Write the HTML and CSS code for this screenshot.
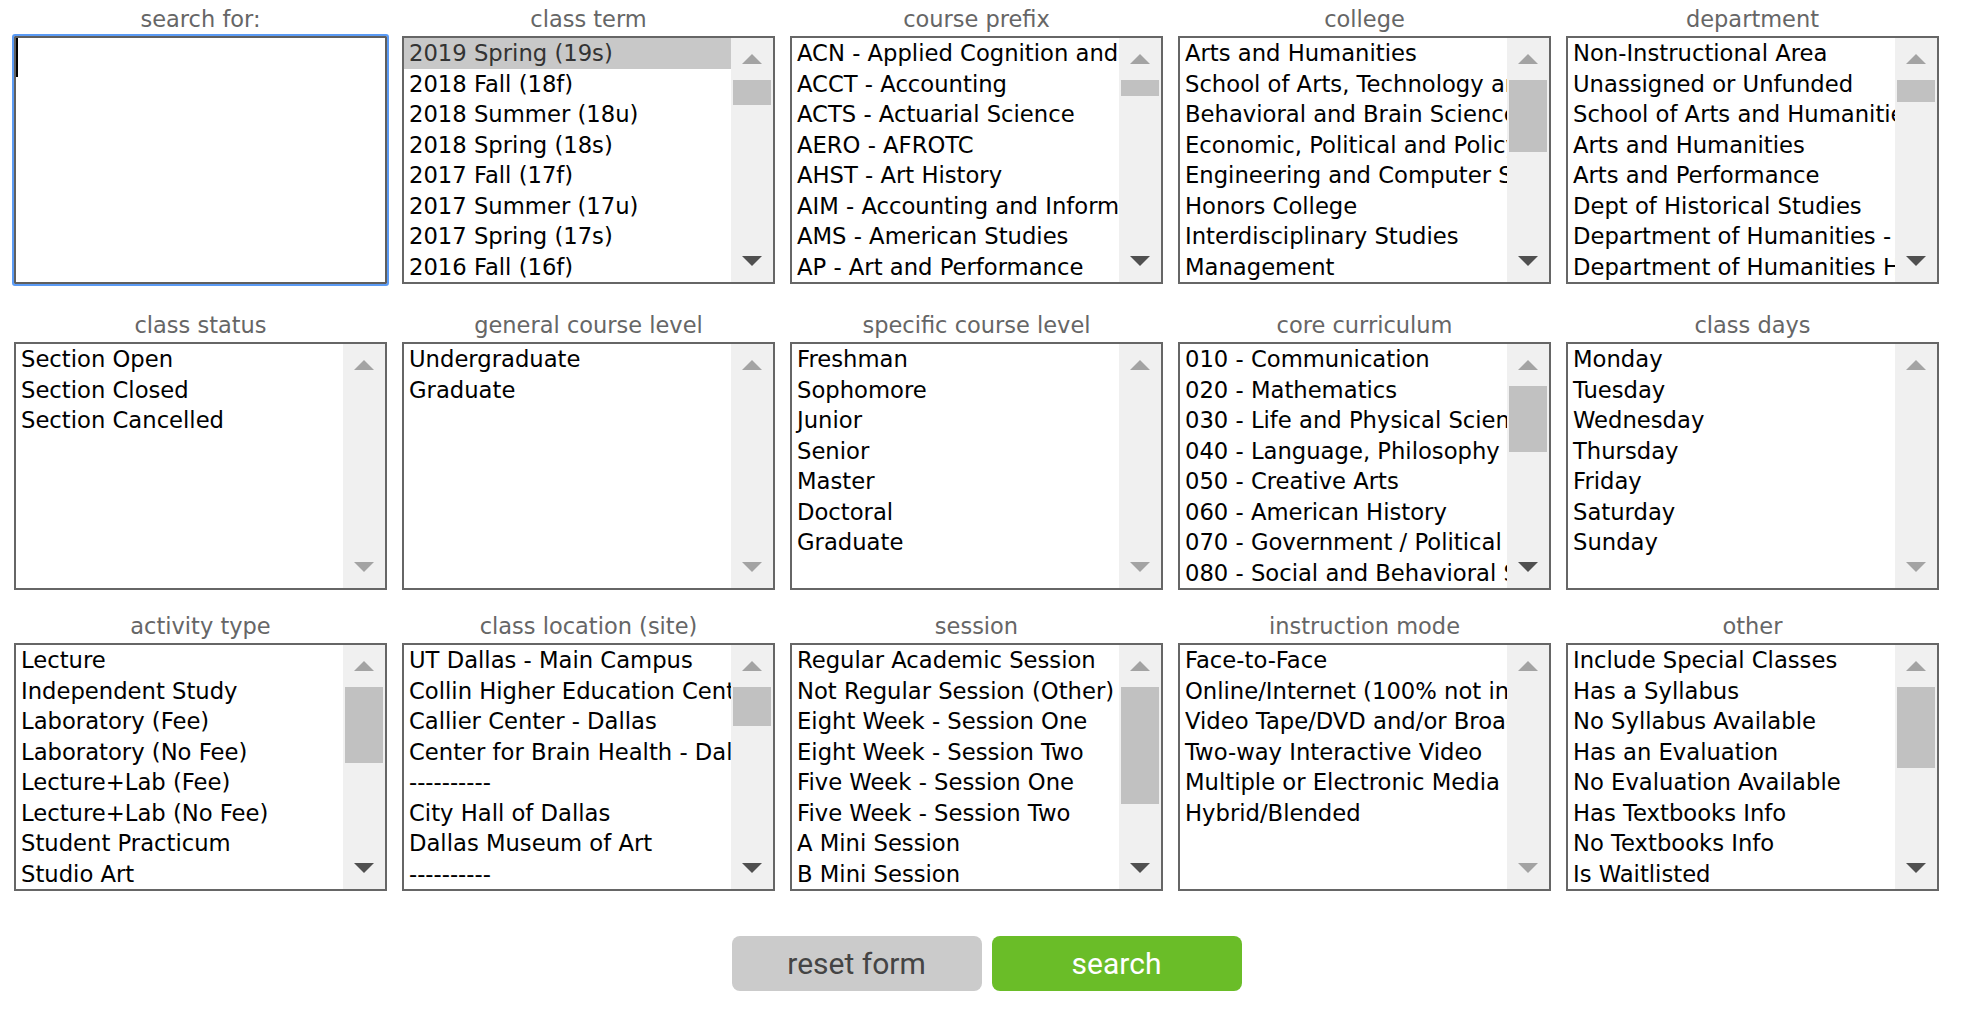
FILE: index.html
```html
<!DOCTYPE html>
<html lang="en">
<head>
<meta charset="utf-8">
<title>Class Search</title>
<link rel="stylesheet" href="styles.css">
</head>
<body>
<form class="search-form">
  <div class="field-grid">

    <div class="field">
      <div class="field-label">search for:</div>
      <div class="textbox is-focused"><span class="caret"></span></div>
    </div>

    <div class="field">
      <div class="field-label">class term</div>
      <div class="listbox">
        <ul class="options">
          <li class="option is-selected">2019 Spring (19s)</li>
          <li class="option">2018 Fall (18f)</li>
          <li class="option">2018 Summer (18u)</li>
          <li class="option">2018 Spring (18s)</li>
          <li class="option">2017 Fall (17f)</li>
          <li class="option">2017 Summer (17u)</li>
          <li class="option">2017 Spring (17s)</li>
          <li class="option">2016 Fall (16f)</li>
          <li class="option">2016 Summer (16u)</li>
        </ul>
        <div class="scrollbar">
          <div class="sb-btn"><span class="arrow-up"></span></div>
          <div class="sb-track"><div class="sb-thumb" style="height:25px"></div></div>
          <div class="sb-btn is-active"><span class="arrow-down"></span></div>
        </div>
      </div>
    </div>

    <div class="field">
      <div class="field-label">course prefix</div>
      <div class="listbox">
        <ul class="options">
          <li class="option">ACN - Applied Cognition and Neuroscience</li>
          <li class="option">ACCT - Accounting</li>
          <li class="option">ACTS - Actuarial Science</li>
          <li class="option">AERO - AFROTC</li>
          <li class="option">AHST - Art History</li>
          <li class="option">AIM - Accounting and Information Management</li>
          <li class="option">AMS - American Studies</li>
          <li class="option">AP - Art and Performance</li>
          <li class="option">ARAB - Arabic</li>
        </ul>
        <div class="scrollbar">
          <div class="sb-btn"><span class="arrow-up"></span></div>
          <div class="sb-track"><div class="sb-thumb" style="height:16px"></div></div>
          <div class="sb-btn is-active"><span class="arrow-down"></span></div>
        </div>
      </div>
    </div>

    <div class="field">
      <div class="field-label">college</div>
      <div class="listbox">
        <ul class="options">
          <li class="option">Arts and Humanities</li>
          <li class="option">School of Arts, Technology and Emerging Communication</li>
          <li class="option">Behavioral and Brain Sciences</li>
          <li class="option">Economic, Political and Policy Sciences</li>
          <li class="option">Engineering and Computer Science</li>
          <li class="option">Honors College</li>
          <li class="option">Interdisciplinary Studies</li>
          <li class="option">Management</li>
          <li class="option">Natural Sciences and Mathematics</li>
        </ul>
        <div class="scrollbar">
          <div class="sb-btn"><span class="arrow-up"></span></div>
          <div class="sb-track"><div class="sb-thumb" style="height:72px"></div></div>
          <div class="sb-btn is-active"><span class="arrow-down"></span></div>
        </div>
      </div>
    </div>

    <div class="field">
      <div class="field-label">department</div>
      <div class="listbox">
        <ul class="options">
          <li class="option">Non-Instructional Area</li>
          <li class="option">Unassigned or Unfunded</li>
          <li class="option">School of Arts and Humanities</li>
          <li class="option">Arts and Humanities</li>
          <li class="option">Arts and Performance</li>
          <li class="option">Dept of Historical Studies</li>
          <li class="option">Department of Humanities - Studies in Literature</li>
          <li class="option">Department of Humanities History of Ideas</li>
          <li class="option">Department of Literary Studies</li>
        </ul>
        <div class="scrollbar">
          <div class="sb-btn"><span class="arrow-up"></span></div>
          <div class="sb-track"><div class="sb-thumb" style="height:22px"></div></div>
          <div class="sb-btn is-active"><span class="arrow-down"></span></div>
        </div>
      </div>
    </div>

    <div class="field">
      <div class="field-label">class status</div>
      <div class="listbox">
        <ul class="options">
          <li class="option">Section Open</li>
          <li class="option">Section Closed</li>
          <li class="option">Section Cancelled</li>
        </ul>
        <div class="scrollbar">
          <div class="sb-btn"><span class="arrow-up"></span></div>
          <div class="sb-track"></div>
          <div class="sb-btn"><span class="arrow-down"></span></div>
        </div>
      </div>
    </div>

    <div class="field">
      <div class="field-label">general course level</div>
      <div class="listbox">
        <ul class="options">
          <li class="option">Undergraduate</li>
          <li class="option">Graduate</li>
        </ul>
        <div class="scrollbar">
          <div class="sb-btn"><span class="arrow-up"></span></div>
          <div class="sb-track"></div>
          <div class="sb-btn"><span class="arrow-down"></span></div>
        </div>
      </div>
    </div>

    <div class="field">
      <div class="field-label">specific course level</div>
      <div class="listbox">
        <ul class="options">
          <li class="option">Freshman</li>
          <li class="option">Sophomore</li>
          <li class="option">Junior</li>
          <li class="option">Senior</li>
          <li class="option">Master</li>
          <li class="option">Doctoral</li>
          <li class="option">Graduate</li>
        </ul>
        <div class="scrollbar">
          <div class="sb-btn"><span class="arrow-up"></span></div>
          <div class="sb-track"></div>
          <div class="sb-btn"><span class="arrow-down"></span></div>
        </div>
      </div>
    </div>

    <div class="field">
      <div class="field-label">core curriculum</div>
      <div class="listbox">
        <ul class="options">
          <li class="option">010 - Communication</li>
          <li class="option">020 - Mathematics</li>
          <li class="option">030 - Life and Physical Sciences</li>
          <li class="option">040 - Language, Philosophy and Culture</li>
          <li class="option">050 - Creative Arts</li>
          <li class="option">060 - American History</li>
          <li class="option">070 - Government / Political Science</li>
          <li class="option">080 - Social and Behavioral Sciences</li>
          <li class="option">090 - Component Area Option</li>
        </ul>
        <div class="scrollbar">
          <div class="sb-btn"><span class="arrow-up"></span></div>
          <div class="sb-track"><div class="sb-thumb" style="height:66px"></div></div>
          <div class="sb-btn is-active"><span class="arrow-down"></span></div>
        </div>
      </div>
    </div>

    <div class="field">
      <div class="field-label">class days</div>
      <div class="listbox">
        <ul class="options">
          <li class="option">Monday</li>
          <li class="option">Tuesday</li>
          <li class="option">Wednesday</li>
          <li class="option">Thursday</li>
          <li class="option">Friday</li>
          <li class="option">Saturday</li>
          <li class="option">Sunday</li>
        </ul>
        <div class="scrollbar">
          <div class="sb-btn"><span class="arrow-up"></span></div>
          <div class="sb-track"></div>
          <div class="sb-btn"><span class="arrow-down"></span></div>
        </div>
      </div>
    </div>

    <div class="field">
      <div class="field-label">activity type</div>
      <div class="listbox">
        <ul class="options">
          <li class="option">Lecture</li>
          <li class="option">Independent Study</li>
          <li class="option">Laboratory (Fee)</li>
          <li class="option">Laboratory (No Fee)</li>
          <li class="option">Lecture+Lab (Fee)</li>
          <li class="option">Lecture+Lab (No Fee)</li>
          <li class="option">Student Practicum</li>
          <li class="option">Studio Art</li>
          <li class="option">Seminar</li>
        </ul>
        <div class="scrollbar">
          <div class="sb-btn"><span class="arrow-up"></span></div>
          <div class="sb-track"><div class="sb-thumb" style="height:76px"></div></div>
          <div class="sb-btn is-active"><span class="arrow-down"></span></div>
        </div>
      </div>
    </div>

    <div class="field">
      <div class="field-label">class location (site)</div>
      <div class="listbox">
        <ul class="options">
          <li class="option">UT Dallas - Main Campus</li>
          <li class="option">Collin Higher Education Center</li>
          <li class="option">Callier Center - Dallas</li>
          <li class="option">Center for Brain Health - Dallas</li>
          <li class="option">----------</li>
          <li class="option">City Hall of Dallas</li>
          <li class="option">Dallas Museum of Art</li>
          <li class="option">----------</li>
          <li class="option">Online</li>
        </ul>
        <div class="scrollbar">
          <div class="sb-btn"><span class="arrow-up"></span></div>
          <div class="sb-track"><div class="sb-thumb" style="height:39px"></div></div>
          <div class="sb-btn is-active"><span class="arrow-down"></span></div>
        </div>
      </div>
    </div>

    <div class="field">
      <div class="field-label">session</div>
      <div class="listbox">
        <ul class="options">
          <li class="option">Regular Academic Session</li>
          <li class="option">Not Regular Session (Other)</li>
          <li class="option">Eight Week - Session One</li>
          <li class="option">Eight Week - Session Two</li>
          <li class="option">Five Week - Session One</li>
          <li class="option">Five Week - Session Two</li>
          <li class="option">A Mini Session</li>
          <li class="option">B Mini Session</li>
          <li class="option">Ten Week Session</li>
        </ul>
        <div class="scrollbar">
          <div class="sb-btn"><span class="arrow-up"></span></div>
          <div class="sb-track"><div class="sb-thumb" style="height:117px"></div></div>
          <div class="sb-btn is-active"><span class="arrow-down"></span></div>
        </div>
      </div>
    </div>

    <div class="field">
      <div class="field-label">instruction mode</div>
      <div class="listbox">
        <ul class="options">
          <li class="option">Face-to-Face</li>
          <li class="option">Online/Internet (100% not in classroom)</li>
          <li class="option">Video Tape/DVD and/or Broadcast</li>
          <li class="option">Two-way Interactive Video</li>
          <li class="option">Multiple or Electronic Media</li>
          <li class="option">Hybrid/Blended</li>
        </ul>
        <div class="scrollbar">
          <div class="sb-btn"><span class="arrow-up"></span></div>
          <div class="sb-track"></div>
          <div class="sb-btn"><span class="arrow-down"></span></div>
        </div>
      </div>
    </div>

    <div class="field">
      <div class="field-label">other</div>
      <div class="listbox">
        <ul class="options">
          <li class="option">Include Special Classes</li>
          <li class="option">Has a Syllabus</li>
          <li class="option">No Syllabus Available</li>
          <li class="option">Has an Evaluation</li>
          <li class="option">No Evaluation Available</li>
          <li class="option">Has Textbooks Info</li>
          <li class="option">No Textbooks Info</li>
          <li class="option">Is Waitlisted</li>
          <li class="option">Is Not Waitlisted</li>
        </ul>
        <div class="scrollbar">
          <div class="sb-btn"><span class="arrow-up"></span></div>
          <div class="sb-track"><div class="sb-thumb" style="height:81px"></div></div>
          <div class="sb-btn is-active"><span class="arrow-down"></span></div>
        </div>
      </div>
    </div>

  </div>

  <div class="actions">
    <button type="button" class="btn btn-reset">reset form</button>
    <button type="button" class="btn btn-search">search</button>
  </div>
</form>
</body>
</html>
```

FILE: styles.css
```css
* {
  box-sizing: border-box;
}

html,
body {
  margin: 0;
  padding: 0;
  background: #ffffff;
}

body {
  font-family: "DejaVu Sans", Verdana, sans-serif;
  color: #000000;
}

.search-form {
  width: 1939px;
  padding-left: 14px;
}

.field-grid {
  display: grid;
  grid-template-columns: repeat(5, 373px);
  grid-template-rows: 284px 306px 301px;
  column-gap: 15px;
}

.field {
  align-self: end;
  display: flex;
  flex-direction: column;
}

.field-label {
  height: 36px;
  padding-top: 4px;
  font-size: 22.5px;
  line-height: 30px;
  color: #666666;
  text-align: center;
  white-space: nowrap;
}

.textbox {
  height: 248px;
  border: 2px solid #5f5f5f;
  outline: 2px solid #5b9bf5;
  border-radius: 1px;
  background: #ffffff;
}

.caret {
  display: block;
  width: 2px;
  height: 39px;
  background: #000000;
}

.listbox {
  height: 248px;
  border: 2px solid #666666;
  background: #ffffff;
  display: flex;
}

.options {
  flex: 1;
  min-width: 0;
  margin: 0;
  padding: 0;
  list-style: none;
  overflow: hidden;
}

.option {
  height: 30.5px;
  padding: 1px 0 0 5px;
  font-size: 22.7px;
  line-height: 29.5px;
  white-space: nowrap;
  overflow: hidden;
  color: #000000;
}

.option.is-selected {
  background: #c8c8c8;
  color: #333333;
}

.scrollbar {
  flex: none;
  width: 42px;
  background: #f0f0f0;
  display: flex;
  flex-direction: column;
}

.sb-btn {
  flex: none;
  height: 42px;
  display: flex;
  align-items: center;
  justify-content: center;
}

.sb-track {
  flex: 1;
  padding: 0 2px;
}

.sb-thumb {
  background: #c1c1c1;
}

.arrow-up {
  width: 0;
  height: 0;
  border-left: 10px solid transparent;
  border-right: 10px solid transparent;
  border-bottom: 10px solid #a3a3a3;
}

.arrow-down {
  width: 0;
  height: 0;
  border-left: 10px solid transparent;
  border-right: 10px solid transparent;
  border-top: 10px solid #a3a3a3;
}

.sb-btn.is-active .arrow-down {
  border-top-color: #505050;
}

.actions {
  display: flex;
  justify-content: center;
  gap: 10px;
  margin-top: 45px;
  padding-left: 20px;
}

.btn {
  width: 250px;
  height: 55px;
  border: 0;
  border-radius: 8px;
  padding: 0;
  font-family: Roboto, "DejaVu Sans", sans-serif;
  font-size: 30px;
  line-height: 55px;
  cursor: pointer;
}

.btn-reset {
  background: #cbcbcb;
  color: #444444;
}

.btn-search {
  background: #6abd28;
  color: #ffffff;
}
```
